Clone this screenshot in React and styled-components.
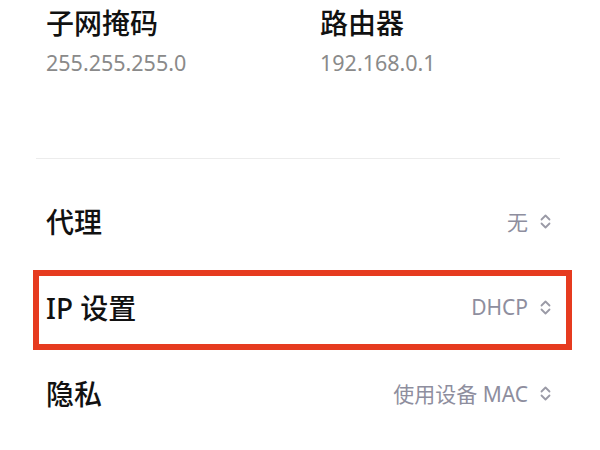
import React from "react";
import styled, { createGlobalStyle } from "styled-components";

const GlobalStyle = createGlobalStyle`
  html, body {
    margin: 0;
    padding: 0;
    background: #fff;
  }
  body {
    font-family: "Noto Sans", "Noto Sans CJK SC", sans-serif;
  }
`;

const Page = styled.div`
  width: 600px;
  height: 450px;
  overflow: hidden;
  background: #fff;
`;

const InfoGrid = styled.div`
  display: grid;
  grid-template-columns: 274px 1fr;
  padding: 5px 0 0 46px;
`;

const InfoItem = styled.div`
  display: flex;
  flex-direction: column;
`;

const InfoLabel = styled.div`
  font-size: 28px;
  line-height: 37px;
  font-weight: 500;
  color: #111;
`;

const InfoValue = styled.div`
  font-size: 21.5px;
  line-height: 30px;
  margin-top: 6px;
  color: #8a8a8a;
`;

const Divider = styled.div`
  height: 1px;
  background: #ececec;
  margin: 80px 40px 0 36px;
`;

const List = styled.div`
  display: flex;
  flex-direction: column;
  gap: 6px;
  margin-top: 25px;
`;

const Row = styled.div`
  display: flex;
  align-items: center;
  justify-content: space-between;
  height: 80px;
  box-sizing: border-box;
  margin: 0 28px 0 33px;
  padding: 0 15px 0 7px;
  border: 6px solid ${(p) => (p.$highlight ? "#e63b1f" : "transparent")};
`;

const RowLabel = styled.div`
  font-size: 28px;
  font-weight: 500;
  color: #111;
  margin-top: -7px;
`;

const RowValue = styled.div`
  display: flex;
  align-items: center;
  gap: 12px;
  font-size: 21px;
  color: #8e8e9e;
  margin-top: -6px;
`;

const Chevron = () => (
  <svg width="11" height="15" viewBox="0 0 11 15" fill="none">
    <path
      d="M1.5 5.5 L5.5 1.5 L9.5 5.5 M1.5 9.5 L5.5 13.5 L9.5 9.5"
      stroke="#9a9aa6"
      strokeWidth="1.8"
      strokeLinecap="round"
      strokeLinejoin="round"
    />
  </svg>
);

const info = [
  { label: "子网掩码", value: "255.255.255.0" },
  { label: "路由器", value: "192.168.0.1" },
];

const rows = [
  { label: "代理", value: "无" },
  { label: "IP 设置", value: "DHCP", highlight: true },
  { label: "隐私", value: "使用设备 MAC" },
];

export default function App() {
  return (
    <Page>
      <GlobalStyle />
      <InfoGrid>
        {info.map((item) => (
          <InfoItem key={item.label}>
            <InfoLabel>{item.label}</InfoLabel>
            <InfoValue>{item.value}</InfoValue>
          </InfoItem>
        ))}
      </InfoGrid>
      <Divider />
      <List>
        {rows.map((row) => (
          <Row key={row.label} $highlight={row.highlight}>
            <RowLabel>{row.label}</RowLabel>
            <RowValue>
              {row.value}
              <Chevron />
            </RowValue>
          </Row>
        ))}
      </List>
    </Page>
  );
}
